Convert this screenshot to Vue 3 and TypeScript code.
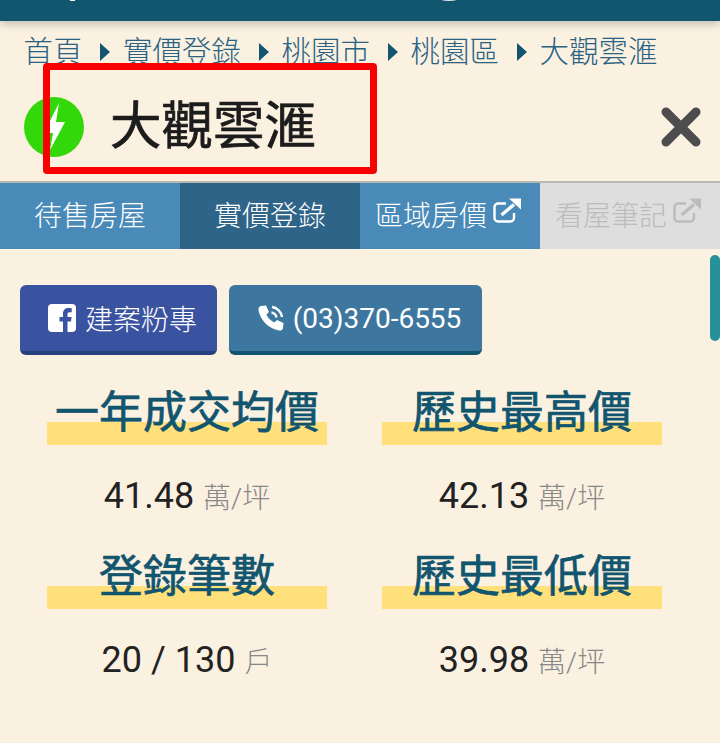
<script setup lang="ts">
interface Stat { label: string; value: string; unit: string }

const crumbs = ['首頁', '實價登錄', '桃園市', '桃園區', '大觀雲滙']
const stats: Stat[] = [
  { label: '一年成交均價', value: '41.48', unit: '萬/坪' },
  { label: '歷史最高價', value: '42.13', unit: '萬/坪' },
  { label: '登錄筆數', value: '20 / 130', unit: '戶' },
  { label: '歷史最低價', value: '39.98', unit: '萬/坪' },
]
</script>

<template>
  <div class="page">
    <div class="topbar">
      <span class="peek peek-a"></span>
      <span class="peek peek-b"></span>
    </div>

    <nav class="crumbs">
      <template v-for="(c, i) in crumbs" :key="c">
        <span v-if="i > 0" class="arrow"></span>
        <span>{{ c }}</span>
      </template>
    </nav>

    <div class="title-row">
      <svg class="amp" width="60" height="60" viewBox="0 0 60 60">
        <circle cx="30" cy="30" r="30" fill="#33d80b" />
        <path d="M35 6 L20 36 H29 L26 53 L41 25 H32 Z" fill="#fff" />
      </svg>
      <h1 class="title">大觀雲滙</h1>
      <svg class="close" width="40" height="40" viewBox="0 0 40 40">
        <path d="M5 5 L35 35 M35 5 L5 35" stroke="#4d4d4d" stroke-width="9" stroke-linecap="round" />
      </svg>
      <div class="redbox"></div>
    </div>

    <div class="tabs">
      <div class="tab">待售房屋</div>
      <div class="tab active">實價登錄</div>
      <div class="tab ext-tab">區域房價
        <svg class="ext" width="28" height="26" viewBox="0 0 28 26">
          <path d="M21 15 V20 a3.5 3.5 0 0 1 -3.5 3.5 H5 A3.5 3.5 0 0 1 1.5 20 V9 A3.5 3.5 0 0 1 5 5.500 H13" fill="none" stroke="currentColor" stroke-width="2.400" />
          <path d="M8.500 17 L21 6.500" fill="none" stroke="currentColor" stroke-width="3.400" />
          <path d="M16 0.500 H28 V11.500 Z" fill="currentColor" />
        </svg>
      </div>
      <div class="tab ext-tab off">看屋筆記
        <svg class="ext" width="28" height="26" viewBox="0 0 28 26">
          <path d="M21 15 V20 a3.5 3.5 0 0 1 -3.5 3.5 H5 A3.5 3.5 0 0 1 1.5 20 V9 A3.5 3.5 0 0 1 5 5.500 H13" fill="none" stroke="currentColor" stroke-width="2.400" />
          <path d="M8.500 17 L21 6.500" fill="none" stroke="currentColor" stroke-width="3.400" />
          <path d="M16 0.500 H28 V11.500 Z" fill="currentColor" />
        </svg>
      </div>
    </div>

    <div class="scrollthumb"></div>

    <div class="actions">
      <a class="btn fb">
        <svg width="28" height="28" viewBox="0 0 28 28">
          <path fill-rule="evenodd" fill="#fff" d="M4 0 H24 a4 4 0 0 1 4 4 V24 a4 4 0 0 1 -4 4 H19.500 V17.500 H23 L23.600 13 H19.500 V10.500 C19.500 9 20 8.200 21.800 8.200 H23.700 V4.300 C23 4.200 21.800 4.100 20.500 4.100 C17.300 4.100 15 6 15 9.800 V13 H11.500 V17.500 H15 V28 H4 a4 4 0 0 1 -4 -4 V4 a4 4 0 0 1 4 -4 Z" />
        </svg>
        建案粉專
      </a>
      <a class="btn phone">
        <svg width="26" height="26" viewBox="0 0 26 26">
          <path fill="#fff" d="M3 1 L8 0.500 L11 7 L8.500 9.500 C9.500 12.500 13 16 16.500 17.500 L19 15 L25.500 18 L25 23 C24.500 25 23 25.800 21 25.500 C11 24 2 15 0.500 5 C0.300 3 1.200 1.500 3 1 Z" />
          <path fill="none" stroke="#fff" stroke-width="2.400" d="M13.500 7.500 C16 7.800 18.200 10 18.500 12.500 M14 2 C19 2.500 23.500 7 24 12" />
        </svg>
        (03)370-6555
      </a>
    </div>

    <div class="stats">
      <div v-for="s in stats" :key="s.label" class="stat">
        <div class="stat-head"><span class="stat-label">{{ s.label }}</span></div>
        <div class="stat-value">{{ s.value }} <span class="unit">{{ s.unit }}</span></div>
      </div>
    </div>
  </div>
</template>

<style>
html, body { margin: 0; background: #fbf1e1; overflow: hidden; }
</style>

<style scoped>
.page { position: relative; width: 720px; height: 743px; overflow: hidden; background: #fbf1e1; font-family: Roboto, "Noto Sans CJK TC", sans-serif; }
.topbar { position: relative; height: 21px; background: #11556f; box-shadow: 0 3px 8px rgba(0,0,0,0.22); overflow: hidden; }
.peek { position: absolute; top: -6px; background: #fff; }
.peek-a { left: 70px; width: 5px; height: 7px; }
.peek-b { left: 438px; width: 22px; height: 7px; border-radius: 50%; top: -6px; background: #dfe8ea; }
.crumbs { display: flex; align-items: center; height: 32px; margin: 15px 0 0 23.500px; font-size: 29.500px; line-height: 32px; color: #2a6283; font-weight: 300; }
.arrow { width: 0; height: 0; margin: 0 13px 0 17.500px; border-style: solid; border-width: 9px 0 9px 10px; border-color: transparent transparent transparent #11556f; }
.title-row { position: relative; display: flex; align-items: center; height: 60px; margin-top: 29px; padding: 0 19px 0 24px; }
.amp { flex: none; }
.title { margin: 0 0 0 26px; flex: 1; font-size: 51.500px; line-height: 60px; font-weight: 400; color: #1c1c1c; -webkit-text-stroke: 0.7px #1c1c1c; }
.close { flex: none; }
.redbox { position: absolute; left: 43px; top: -34px; width: 334px; height: 111px; box-sizing: border-box; border: 7px solid #f80000; border-radius: 4px; }
.tabs { display: grid; grid-template-columns: repeat(4, 180px); height: 66px; margin-top: 24px; border-top: 2px solid #b8b8b0; }
.tab { display: flex; align-items: center; justify-content: center; gap: 6px; background: #4a8ab8; color: #fff; font-size: 28px; font-weight: 300; padding-bottom: 4px; box-sizing: border-box; }
.tab.ext-tab { padding-right: 4px; }
.tab.active { background: #2f6489; }
.tab.off { background: #dedede; color: #bcbcbc; }
.ext { flex: none; margin-top: -6px; }
.scrollthumb { position: absolute; right: 0; top: 255px; width: 10px; height: 86px; border-radius: 5px; background: #26919a; }
.actions { display: flex; gap: 12px; margin: 36px 0 0 20px; }
.btn { display: flex; align-items: center; justify-content: center; gap: 9px; box-sizing: border-box; height: 70px; border-radius: 6px; color: #fff; font-size: 28px; font-weight: 300; }
.fb { width: 197px; background: #3a53a0; border-bottom: 4px solid #29407f; padding-left: 8px; }
.phone { width: 253px; background: #3d779f; border-bottom: 4px solid #11556f; padding-left: 8px; font-weight: 400; }
.stats { display: grid; grid-template-columns: 280px 280px; column-gap: 55px; margin: 28px 0 0 47px; }
.stat { height: 164px; display: flex; flex-direction: column; align-items: center; }
.stat-head { width: 100%; height: 62px; text-align: center; background: linear-gradient(#ffe07a, #ffe07a) no-repeat 0 39px / 100% 23px; }
.stat-label { font-size: 44px; line-height: 60px; font-weight: 400; color: #11556f; -webkit-text-stroke: 0.7px #11556f; white-space: nowrap; }
.stat-value { margin-top: 29px; font-size: 36px; line-height: 44px; color: #222; }
.unit { font-size: 28px; color: #888; font-weight: 300; }
</style>
